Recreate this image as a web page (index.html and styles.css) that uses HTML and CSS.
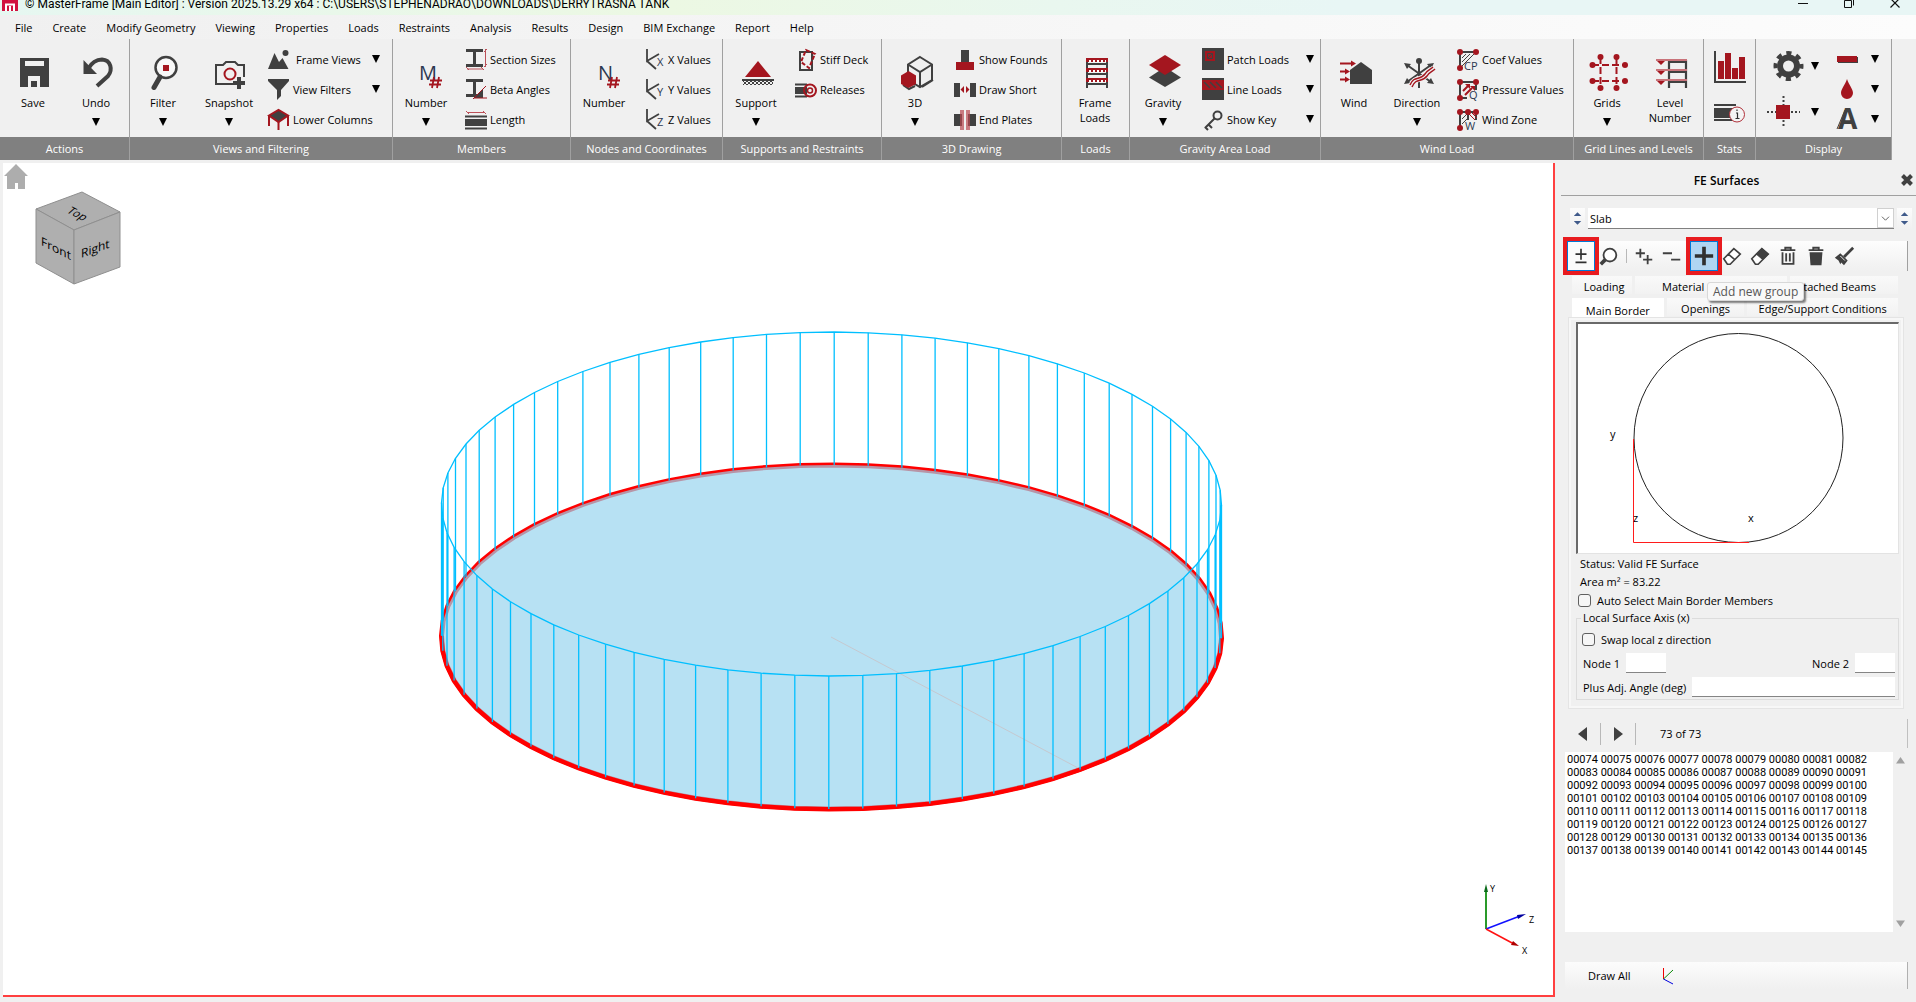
FILE: index.html
```html
<!DOCTYPE html>
<html lang="en">
<head>
    <meta charset="UTF-8">
    <meta name="viewport" content="width=device-width, initial-scale=1.0">
    <title>MasterFrame</title>
    <link rel="stylesheet" href="styles.css">
</head>
<body>
    <header class="titlebar">
        <svg class="logo" width="16" height="11" viewBox="0 0 16 11"><rect width="16" height="11" fill="#d1123f"/><path d="M4 11V4M8 11V6M12 11V4M3 4.500H13" stroke="#fff" stroke-width="2" fill="none"/></svg>
        <span class="title-text">© MasterFrame [Main Editor] : Version 2025.13.29 x64 : C:\USERS\STEPHENADRAO\DOWNLOADS\DERRYTRASNA TANK</span>
        <div class="window-buttons">
            <button aria-label="Minimize"><svg width="10" height="10" viewBox="0 0 10 10"><path d="M0 5.500H10" stroke="#111"/></svg></button>
            <button aria-label="Restore"><svg width="10" height="10" viewBox="0 0 10 10"><path d="M.5 2.500H7.500V9.500H.5ZM3 .5H8Q9.500 .5 9.500 2V7.500" fill="none" stroke="#111"/></svg></button>
            <button aria-label="Close"><svg width="10" height="10" viewBox="0 0 10 10"><path d="M.5 .5L9.500 9.500M9.500 .5L.5 9.500" stroke="#111" stroke-width="1.200"/></svg></button>
        </div>
    </header>

    <nav class="menubar">
        <button>File</button>
        <button>Create</button>
        <button>Modify Geometry</button>
        <button>Viewing</button>
        <button>Properties</button>
        <button>Loads</button>
        <button>Restraints</button>
        <button>Analysis</button>
        <button>Results</button>
        <button>Design</button>
        <button>BIM Exchange</button>
        <button>Report</button>
        <button>Help</button>
    </nav>

    <div class="ribbon">
        <section class="group group-actions">
            <div class="group-body">
                <button class="tool">
                    <svg viewBox="0 0 40 40"><path fill="#404040" fill-rule="evenodd" d="M7 7H36V36H27V25H15V36H7ZM12 10V15H31V10ZM18 30H24V36H18Z"/></svg>
                    <span>Save</span>
                </button>
                <button class="tool narrow">
                    <svg viewBox="0 0 40 40"><path d="M12 18C16 11 20 8.500 26 8.500C35 9 37 19 32 25L21 35" fill="none" stroke="#404040" stroke-width="4"/><path d="M7.500 9V23H21Z" fill="#404040"/></svg>
                    <span>Undo</span><i class="caret"></i>
                </button>
            </div>
            <h2>Actions</h2>
        </section>

        <section class="group group-views">
            <div class="group-body">
                <button class="tool">
                    <svg viewBox="0 0 40 40"><circle cx="23" cy="16.500" r="10.500" fill="#f8f8f8" stroke="#404040" stroke-width="2.500"/><path d="M17 26L11 36.500" stroke="#404040" stroke-width="5" stroke-linecap="round"/><rect x="20" y="14" width="6" height="6" fill="#a4161f"/></svg>
                    <span>Filter</span><i class="caret"></i>
                </button>
                <button class="tool">
                    <svg viewBox="0 0 40 40"><path d="M35 26V14H29L26 11H17L14 14H7V33H24" fill="none" stroke="#404040" stroke-width="2"/><circle cx="21" cy="23" r="5.500" fill="none" stroke="#a4161f" stroke-width="2"/><path d="M30 26V38M24 32H36" stroke="#404040" stroke-width="4"/></svg>
                    <span>Snapshot</span><i class="caret"></i>
                </button>
                <div class="tool-list with-caret">
                    <button><svg viewBox="0 0 22 22"><path d="M0 21L6.500 5L11 14L14.500 10L20.500 21Z" fill="#404040"/><circle cx="17.500" cy="5" r="3" fill="#404040"/></svg><span class="indent">Frame Views</span><i class="caret"></i></button>
                    <button><svg viewBox="0 0 22 22"><path d="M0 1H21V3L13 12V18L9 22V12L0 3Z" fill="#404040"/></svg><span>View Filters</span><i class="caret"></i></button>
                    <button><svg viewBox="0 0 22 22"><path d="M1 7V18M20 7V18M10.500 14V22" stroke="#a4161f" stroke-width="2"/><path d="M1 7.500L10.500 2L20 7.500L10.500 14Z" fill="#404040" stroke="#a4161f" stroke-width="2"/></svg><span>Lower Columns</span></button>
                </div>
            </div>
            <h2>Views and Filtering</h2>
        </section>

        <section class="group group-members">
            <div class="group-body">
                <button class="tool">
                    <svg viewBox="0 0 40 40"><text x="13" y="29" class="glyph-big">M</text><path d="M28 26L26 37M33 26L31 37M24 29.500H36M23 33.500H35" stroke="#a4161f" stroke-width="1.800"/></svg>
                    <span>Number</span><i class="caret"></i>
                </button>
                <div class="tool-list">
                    <button><svg viewBox="0 0 22 22"><path d="M1 2.500H18M1 17.500H18M9.500 2V18" stroke="#404040" stroke-width="3"/><path d="M20.500 1V19M19 4L22 1M19 19L22 16M2 21H18M1 19L4 22M16 19L19 22" stroke="#bb5058" fill="none"/></svg><span>Section Sizes</span></button>
                    <button><svg viewBox="0 0 22 22"><path d="M1 2.500H18M1 17.500H14M9.500 2V18" stroke="#404040" stroke-width="3"/><path d="M9 20L18 11V20Z" fill="#404040"/><path d="M8 21L21 8M9 20H22" stroke="#a4161f" fill="none"/></svg><span>Beta Angles</span></button>
                    <button><svg viewBox="0 0 22 22"><path d="M0 8.500H22M0 20.500H22" stroke="#404040" stroke-width="2"/><rect y="11" width="22" height="7" fill="#404040"/><path d="M2 4.500H20M1 3L4 6M18 3L21 6" stroke="#bb5058"/></svg><span>Length</span></button>
                </div>
            </div>
            <h2>Members</h2>
        </section>

        <section class="group group-nodes">
            <div class="group-body">
                <button class="tool">
                    <svg viewBox="0 0 40 40"><text x="14" y="29" class="glyph-big">N</text><path d="M28 26L26 37M33 26L31 37M24 29.500H36M23 33.500H35" stroke="#a4161f" stroke-width="1.800"/></svg>
                    <span>Number</span>
                </button>
                <div class="tool-list">
                    <button><svg viewBox="0 0 22 22"><path d="M4 1V13L16 6M4 13L13 21" fill="none" stroke="#404040" stroke-width="1.800"/><text x="14" y="18" class="glyph-small">X</text></svg><span>X Values</span></button>
                    <button><svg viewBox="0 0 22 22"><path d="M4 1V13L16 6M4 13L13 21" fill="none" stroke="#404040" stroke-width="1.800"/><text x="14" y="18" class="glyph-small">Y</text></svg><span>Y Values</span></button>
                    <button><svg viewBox="0 0 22 22"><path d="M4 1V13L16 6M4 13L13 21" fill="none" stroke="#404040" stroke-width="1.800"/><text x="14" y="18" class="glyph-small">Z</text></svg><span>Z Values</span></button>
                </div>
            </div>
            <h2>Nodes and Coordinates</h2>
        </section>

        <section class="group group-supports">
            <div class="group-body">
                <button class="tool">
                    <svg viewBox="0 0 40 40"><path d="M22 10L35 26H9Z" fill="#a4161f"/><path d="M6 29H38" stroke="#404040" stroke-width="2"/><path d="M7 30l4 4l4-4l4 4l4-4l4 4l4-4l4 4l2-2M7 34l4-4l4 4l4-4l4 4l4-4l4 4l4-4l2 2" fill="none" stroke="#404040"/></svg>
                    <span>Support</span><i class="caret"></i>
                </button>
                <div class="tool-list">
                    <button><svg viewBox="0 0 22 22"><rect x="5" y="4" width="12" height="18" fill="none" stroke="#404040" stroke-width="2"/><path d="M11 2L20 6L14 20L6 14Z" fill="none" stroke="#a4161f" stroke-width="2" stroke-dasharray="4 2"/></svg><span>Stiff Deck</span></button>
                    <button><svg viewBox="0 0 22 22"><path d="M0 6.500H12M0 18.500H12" stroke="#404040" stroke-width="2"/><rect y="9" width="12" height="7" fill="#404040"/><circle cx="15" cy="12.500" r="6" fill="none" stroke="#a4161f" stroke-width="2"/><circle cx="15" cy="12.500" r="2.500" fill="none" stroke="#a4161f" stroke-width="1.500"/></svg><span>Releases</span></button>
                </div>
            </div>
            <h2>Supports and Restraints</h2>
        </section>

        <section class="group group-drawing">
            <div class="group-body">
                <button class="tool">
                    <svg viewBox="0 0 40 40"><path d="M25 6L37 13.500V29L25 36L13 29V13.500ZM13 13.500L25 21L37 13.500M25 21V36" fill="#f0f0f0" stroke="#404040" stroke-width="2"/><path d="M27 36L38 29M8 34L14 38L20 35" fill="none" stroke="#404040" stroke-width="2"/><path d="M13.500 20L21 24.500V33L13.500 37L6 33V24.500Z" fill="#a4161f"/></svg>
                    <span>3D</span><i class="caret"></i>
                </button>
                <div class="tool-list">
                    <button><svg viewBox="0 0 22 22"><rect x="7" y="2" width="8" height="12" fill="#404040"/><rect x="2" y="14" width="18" height="8" fill="#a4161f"/></svg><span>Show Founds</span></button>
                    <button><svg viewBox="0 0 22 22"><path d="M0 5H6V19H0ZM16 5H22V19H16Z" fill="#404040"/><path d="M10 8V15L6.500 11.500ZM12 8V15L15.500 11.500Z" fill="#a4161f"/></svg><span>Draw Short</span></button>
                    <button><svg viewBox="0 0 22 22"><path d="M0 6H8V18H0ZM14 6H22V18H14Z" fill="#404040"/><path d="M6 2H10V22H6ZM12 2H16V22H12Z" fill="#b84750" opacity=".7"/></svg><span>End Plates</span></button>
                </div>
            </div>
            <h2>3D Drawing</h2>
        </section>

        <section class="group group-loads">
            <div class="group-body">
                <button class="tool">
                    <svg viewBox="0 0 40 40"><path d="M12 8V37M32 8V37M12 13H32M12 23H32M12 33H32" fill="none" stroke="#404040" stroke-width="2"/><path d="M11 9H33M11 19H33M11 29H33" stroke="#a4161f" stroke-width="4"/><path d="M14 10H31M14 20H31M14 30H31" stroke="#fff" stroke-width="2" stroke-dasharray="2 2"/></svg>
                    <span>Frame<br>Loads</span>
                </button>
            </div>
            <h2>Loads</h2>
        </section>

        <section class="group group-gravity">
            <div class="group-body">
                <button class="tool">
                    <svg viewBox="0 0 40 40"><path d="M22 16L38 26.500L22 36L6 26.500Z" fill="#404040"/><path d="M22 4L38 14L22 24L6 14Z" fill="#a4161f"/></svg>
                    <span>Gravity</span><i class="caret"></i>
                </button>
                <div class="tool-list with-caret">
                    <button><svg viewBox="0 0 22 22"><rect width="22" height="22" fill="#404040"/><rect x="3" y="3" width="10" height="10" fill="#a4161f"/><path d="M5.500 5.500H10.500V10.500H5.500ZM6 10L10 6" fill="none" stroke="#404040"/></svg><span>Patch Loads</span><i class="caret"></i></button>
                    <button><svg viewBox="0 0 22 22"><rect width="22" height="22" fill="#404040"/><rect y="2" width="22" height="10" fill="#a4161f"/><path d="M2 4L8 10M8 4L14 10M14 4L20 10" stroke="#404040" stroke-width="1.500"/></svg><span>Line Loads</span><i class="caret"></i></button>
                    <button><svg viewBox="0 0 22 22"><circle cx="15.500" cy="7.500" r="4" fill="none" stroke="#404040" stroke-width="2"/><path d="M12.500 10.500L3 20M7 17L10 20M3 19L6 22" fill="none" stroke="#404040" stroke-width="2"/></svg><span>Show Key</span><i class="caret"></i></button>
                </div>
            </div>
            <h2>Gravity Area Load</h2>
        </section>

        <section class="group group-wind">
            <div class="group-body">
                <button class="tool">
                    <svg viewBox="0 0 40 40"><path d="M16 33V19L27 11L38 19V33Z" fill="#404040"/><path d="M6 12.500H18M6 20.500H12M6 28.500H12" stroke="#a4161f" stroke-width="2"/><path d="M17 9.500V15.500L22 12.500ZM11 17.500V23.500L16 20.500ZM11 25.500V31.500L16 28.500Z" fill="#a4161f"/></svg>
                    <span>Wind</span>
                </button>
                <button class="tool narrow">
                    <svg viewBox="0 0 40 40"><path d="M22 9V37M10 14L34 31M34 14L10 31" stroke="#404040" stroke-width="2"/><circle cx="22" cy="10" r="3" fill="#404040"/><path d="M7 12L14 13L10 18ZM37 12L30 13L34 18ZM7 33L14 32L10 27ZM37 33L30 32L34 27Z" fill="#404040"/><path d="M14 35C18 25 24 31 29 24C31 20 34 20 37 17" fill="none" stroke="#f0f0f0" stroke-width="6"/><path d="M13 34C17 24 23 30 28 23C30 19 33 19 36 16M15 36C19 26 25 32 30 25C32 21 35 21 38 18" fill="none" stroke="#a4161f" stroke-width="1.500"/></svg>
                    <span>Direction</span><i class="caret"></i>
                </button>
                <div class="tool-list spaced">
                    <button><svg viewBox="0 0 22 22"><path d="M19 4H3V20" fill="none" stroke="#404040" stroke-width="2"/><path d="M5 14L13 6M5 18L17 6M5 10L9 6" stroke="#404040"/><g fill="#a4161f"><circle cx="3" cy="4" r="3"/><circle cx="19" cy="4" r="3"/><circle cx="3" cy="20" r="3"/></g><text x="7" y="22" class="glyph-small">CP</text></svg><span>Coef Values</span></button>
                    <button><svg viewBox="0 0 22 22"><path d="M19 12V4H3V20H10" fill="none" stroke="#404040" stroke-width="2"/><path d="M6 13L11 8M8 17L15 10" stroke="#a4161f" stroke-width="2"/><path d="M8 6H13V11ZM13 8H18V13Z" fill="#a4161f"/><g fill="#a4161f"><circle cx="3" cy="4" r="3"/><circle cx="19" cy="4" r="3"/><circle cx="3" cy="20" r="3"/></g><text x="12" y="21" class="glyph-small">Q</text></svg><span>Pressure Values</span></button>
                    <button><svg viewBox="0 0 22 22"><path d="M19 12V4H3V20M11 4V12" fill="none" stroke="#404040" stroke-width="2"/><path d="M5 11L10 6M5 16L10 11" stroke="#404040"/><path d="M12 6L18 12M15 5L20 10" stroke="#a4161f"/><g fill="#a4161f"><circle cx="3" cy="4" r="3"/><circle cx="11" cy="4" r="3"/><circle cx="19" cy="4" r="3"/><circle cx="3" cy="20" r="3"/></g><text x="8" y="22" class="glyph-small">W</text></svg><span>Wind Zone</span></button>
                </div>
            </div>
            <h2>Wind Load</h2>
        </section>

        <section class="group group-grids">
            <div class="group-body">
                <button class="tool">
                    <svg viewBox="0 0 40 40"><path d="M13.500 6V38M29.500 6V38M5 14H38M5 30H38" stroke="#a4161f" stroke-width="2" stroke-dasharray="7 3"/><g fill="#a4161f"><circle cx="13.500" cy="6" r="3"/><circle cx="29.500" cy="6" r="3"/><circle cx="13.500" cy="37" r="3"/><circle cx="29.500" cy="37" r="3"/><circle cx="5.500" cy="14" r="3"/><circle cx="38" cy="14" r="3"/><circle cx="5.500" cy="30" r="3"/><circle cx="38" cy="30" r="3"/></g></svg>
                    <span>Grids</span><i class="caret"></i>
                </button>
                <button class="tool narrow">
                    <svg viewBox="0 0 40 40"><path d="M19 9V37M36 9V37M19 11H36M19 21H36M19 31H36" fill="none" stroke="#404040" stroke-width="2.200"/><path d="M6 9H37M6 19H37M6 29H37" stroke="#c9737a" stroke-width="2"/><path d="M7 10H15L11 14ZM7 20H15L11 24ZM7 30H15L11 34Z" fill="#a4161f"/></svg>
                    <span>Level<br>Number</span>
                </button>
            </div>
            <h2>Grid Lines and Levels</h2>
        </section>

        <section class="group group-stats">
            <div class="group-body stats-body">
                <button aria-label="Statistics"><svg width="32" height="32" viewBox="0 0 32 32"><path d="M1 0V31H32" fill="none" stroke="#404040" stroke-width="2"/><path d="M4 10H10V28H4ZM11 2H17V28H11ZM18 17H24V28H18ZM25 6H31V28H25Z" fill="#a4161f"/></svg></button>
                <button aria-label="Member info"><svg width="32" height="32" viewBox="0 0 32 32"><path d="M0 8H22M0 23H18" stroke="#404040" stroke-width="2"/><rect y="11" width="20" height="10" fill="#404040"/><circle cx="23" cy="17.500" r="7.500" fill="#f4f4f4" stroke="#b03039"/><path d="M22 16H23.500V21.500M21.500 21.500H25.500M23 12.500V14" fill="none" stroke="#303030" stroke-width="1.200"/></svg></button>
            </div>
            <h2>Stats</h2>
        </section>

        <section class="group group-display">
            <div class="group-body">
                <div class="display-list">
                    <button aria-label="Settings"><svg width="38" height="34" viewBox="0 0 38 34"><circle cx="22.500" cy="17" r="8.500" fill="none" stroke="#404040" stroke-width="6"/><circle cx="22.500" cy="17" r="13" fill="none" stroke="#404040" stroke-width="4" stroke-dasharray="5.210 5" stroke-dashoffset="2.600"/></svg><i class="caret"></i></button>
                    <button aria-label="Node display"><svg width="38" height="34" viewBox="0 0 38 34"><path d="M17.500 1V33M1 17H34" stroke="#404040" stroke-width="2" stroke-dasharray="2 2"/><rect x="10" y="10" width="14" height="14" fill="#a4161f"/></svg><i class="caret"></i></button>
                </div>
                <div class="tool-list display-styles">
                    <button aria-label="Line style"><svg viewBox="0 0 22 22"><rect x="2" y="9" width="20" height="6" fill="#404040"/><rect x="1" y="8" width="20" height="6" fill="#a4161f"/></svg><i class="caret"></i></button>
                    <button aria-label="Fill colour"><svg viewBox="0 0 22 22"><path d="M11 1C13 7 17 11 17 15A6 6 0 0 1 5 15C5 11 9 7 11 1Z" fill="#a4161f"/></svg><i class="caret"></i></button>
                    <button aria-label="Font"><svg viewBox="0 0 22 22"><path d="M1 21L9 2" stroke="#404040" fill="none"/><text x="2" y="21" class="glyph-font">A</text></svg><i class="caret"></i></button>
                </div>
            </div>
            <h2>Display</h2>
        </section>
    </div>

    <div class="workspace">
        <main class="viewport">
            <svg class="model" viewBox="3 163 1550 832" role="img" aria-label="Tank model">
                <polygon id="floor-ring" fill="none" stroke="#f00" stroke-width="5"/>
                <polygon id="floor" fill="#98d4ee" fill-opacity=".7"/>
                <path d="M831 637L1080 769" stroke="#c5c8cf"/>
                <polyline id="floor-front" fill="none" stroke="#f00" stroke-width="4"/>
                <polygon id="top-ring" class="wall"/>
                <path id="columns" class="wall"/>

                <g stroke-width="1.500">
                    <path d="M1486 929V890" stroke="#2a9a2a" stroke-width="2"/><path d="M1486 884L1488 892H1484Z" fill="#0a6a1a"/>
                    <path d="M1486 929L1520 916" stroke="#11f"/><path d="M1526 914L1517 915L1518 919Z" fill="#0000a0"/>
                    <path d="M1486 929L1514 944" stroke="#f11"/><path d="M1519 946L1513 941L1511 945Z" fill="#b00000"/>
                </g>
                <g class="axis-label"><text x="1490" y="892">Y</text><text x="1529" y="923">Z</text><text x="1522" y="954">X</text></g>
            </svg>
            <div class="view-nav">
                <button aria-label="Home view"><svg width="24" height="25" viewBox="0 0 24 25"><path d="M12 0L24 12H21V25H14V19H11V25H3V12H0Z" fill="#adadad"/></svg></button>
                <svg class="view-cube" width="88" height="94" viewBox="34 191 88 94">
                    <g stroke="#8f8f8f" stroke-width="1" fill="#afafaf" stroke-linejoin="round">
                        <path d="M36 209L82 192L120 212L74 230Z"/><path d="M36 209L74 230V284L36 263Z"/><path d="M74 230L120 212V267L74 284Z"/>
                    </g>
                    <g class="cube-label">
                        <text transform="translate(41 245) skewY(27)">Front</text>
                        <text transform="translate(81 258) skewY(-20)">Right</text>
                        <text transform="translate(66 212) rotate(28) skewX(-20)" class="cube-top">Top</text>
                    </g>
                </svg>
            </div>
        </main>

        <aside class="panel">
            <div class="panel-head">
                <h1>FE Surfaces</h1>
                <button aria-label="Close panel"><svg width="12" height="12" viewBox="0 0 12 12"><path d="M1.500 1.500L10.500 10.500M10.500 1.500L1.500 10.500" stroke="#404040" stroke-width="4"/></svg></button>
            </div>

            <div class="surface-row">
                <div class="stepper"><button aria-label="Previous type"><i></i></button><button aria-label="Next type"><i class="down"></i></button></div>
                <div class="combo">
                    <select aria-label="Surface type"><option>Slab</option></select>
                    <svg width="17" height="20" viewBox="0 0 17 20"><path d="M4.500 8.500L8.500 12.500L12.500 8.500" fill="none" stroke="#505050"/></svg>
                </div>
                <div class="stepper"><button aria-label="Previous surface"><i></i></button><button aria-label="Next surface"><i class="down"></i></button></div>
            </div>

            <div class="toolbar">
                <button class="pressed marked" aria-label="Add or remove"><svg viewBox="0 0 24 24"><path d="M12 4V16M6 10H18M6 19H18" stroke="#303030" stroke-width="1.800"/></svg></button>
                <button aria-label="Find"><svg viewBox="0 0 24 24"><circle cx="13" cy="11" r="7" fill="#fff" stroke="#404040" stroke-width="2"/><path d="M8 16L3 21" stroke="#404040" stroke-width="4"/></svg></button>
                <hr>
                <button aria-label="Add all"><svg viewBox="0 0 24 24"><path d="M3 9H13M8 4V14M11 16H21M16 11V21" stroke="#404040" stroke-width="2"/></svg></button>
                <button aria-label="Remove all"><svg viewBox="0 0 24 24"><path d="M2 9H12M11 16H21" stroke="#404040" stroke-width="2"/></svg></button>
                <button class="active marked" aria-label="Add new group"><svg viewBox="0 0 24 24"><path d="M12 2V22M2 12H22" stroke="#303030" stroke-width="4"/></svg></button>
                <button aria-label="Erase"><svg viewBox="0 0 24 24"><path d="M3 15L14 4L21 10L10 21H7Z M8 10L15 16" fill="#fff" stroke="#404040" stroke-width="1.800"/></svg></button>
                <button aria-label="Erase group"><svg viewBox="0 0 24 24"><path d="M3 15L14 4L21 10L10 21H7Z" fill="#fff" stroke="#404040" stroke-width="1.800"/><path d="M8 10L14 4L21 10L15 16Z" fill="#404040" stroke="#404040"/></svg></button>
                <button aria-label="Delete"><svg viewBox="0 0 24 24"><path d="M4 5.500H20M9 5V3H15V5M6 8V20.500H18V8M10 9V18M14 9V18" fill="none" stroke="#404040" stroke-width="2"/></svg></button>
                <button aria-label="Delete all"><svg viewBox="0 0 24 24"><path d="M4 5.500H20M9 5V3H15V5" fill="none" stroke="#404040" stroke-width="2"/><path d="M5 8H19L18 22H6Z" fill="#404040"/></svg></button>
                <button aria-label="Clean up"><svg viewBox="0 0 24 24"><path d="M22 3L12 13" stroke="#404040" stroke-width="3"/><path d="M8 9L16 17L12 22L9 19L8 21L6 17L2 14Z" fill="#404040"/><path d="M8 12L13 17" stroke="#f4f4f4"/></svg></button>
                <div class="tooltip" role="tooltip">Add new group</div>
            </div>

            <div class="tabs">
                <div class="tab-row">
                    <button class="tab-loading">Loading</button>
                    <button class="tab-material">Material</button>
                    <button class="tab-beams">Attached Beams</button>
                </div>
                <div class="tab-row">
                    <button class="tab-border selected">Main Border</button>
                    <button class="tab-openings">Openings</button>
                    <button class="tab-edge">Edge/Support Conditions</button>
                </div>
            </div>

            <div class="tab-page">
                <svg class="preview" viewBox="1578 324 320 229">
                    <circle cx="1738.500" cy="438" r="104.500" fill="none" stroke="#222"/>
                    <path d="M1633.500 439V542.500H1749" fill="none" stroke="#ff1c1c" stroke-width="1"/>
                    <text x="1610" y="438">y</text><text x="1633" y="522">z</text><text x="1748" y="522">x</text>
                </svg>
                <p>Status: Valid FE Surface</p>
                <p>Area m² = 83.22</p>
                <label class="check"><input type="checkbox">Auto Select Main Border Members</label>
                <fieldset>
                    <legend>Local Surface Axis (x)</legend>
                    <label class="check"><input type="checkbox">Swap local z direction</label>
                    <div class="field-row">
                        <label for="node1">Node 1</label><input type="text" id="node1" class="node-input">
                        <label for="node2" class="push">Node 2</label><input type="text" id="node2" class="node-input">
                    </div>
                    <div class="field-row">
                        <label for="angle">Plus Adj. Angle (deg)</label><input type="text" id="angle" class="angle-input">
                    </div>
                </fieldset>
            </div>

            <div class="pager">
                <button aria-label="Previous"><svg width="10" height="14" viewBox="0 0 10 14"><path d="M9 0V14L0 7Z" fill="#404040"/></svg></button>
                <hr>
                <button aria-label="Next"><svg width="10" height="14" viewBox="0 0 10 14"><path d="M1 0V14L10 7Z" fill="#404040"/></svg></button>
                <hr>
                <span>73 of 73</span>
            </div>

            <div class="members">
                <textarea readonly aria-label="Members">00074 00075 00076 00077 00078 00079 00080 00081 00082
00083 00084 00085 00086 00087 00088 00089 00090 00091
00092 00093 00094 00095 00096 00097 00098 00099 00100
00101 00102 00103 00104 00105 00106 00107 00108 00109
00110 00111 00112 00113 00114 00115 00116 00117 00118
00119 00120 00121 00122 00123 00124 00125 00126 00127
00128 00129 00130 00131 00132 00133 00134 00135 00136
00137 00138 00139 00140 00141 00142 00143 00144 00145</textarea>
                <div class="scroll">
                    <svg width="9" height="7" viewBox="0 0 9 7"><path d="M4.500 0L9 6.500H0Z" fill="#a0a0a0"/></svg>
                    <svg width="9" height="7" viewBox="0 0 9 7"><path d="M4.500 7L9 .5H0Z" fill="#a0a0a0"/></svg>
                </div>
            </div>

            <div class="draw-bar">
                <button>Draw All</button>
                <button aria-label="Axes"><svg width="12" height="18" viewBox="0 0 12 18"><path d="M1.500 1V12" stroke="#e00"/><path d="M1.500 12L11 3" stroke="#0a8a0a"/><path d="M1.500 12L11 17" stroke="#00d"/></svg></button>
            </div>
        </aside>
    </div>

    <script src="script.js"></script>
</body>
</html>
```
FILE: styles.css
```css
* {
    margin: 0;
    padding: 0;
    box-sizing: border-box;
}

body {
    display: flex;
    flex-direction: column;
    height: 100vh;
    overflow: hidden;
    background: #f0f0f0;
    color: #000;
    font-family: "Open Sans", "Noto Sans", sans-serif;
    font-size: 11px;
}

button {
    border: none;
    background: none;
    color: inherit;
    font: inherit;
}

svg {
    display: block;
    flex: none;
    overflow: visible;
}

/* title bar and menu */
.titlebar {
    display: flex;
    height: 15px;
    padding-left: 2px;
    overflow: hidden;
    background: linear-gradient(90deg, #e6f7f1, #ecf8e3 35%, #e9f7ef 55%, #e8f6f5 70%, #e8f6f5);
}

.title-text {
    margin-left: 7px;
    font-family: Roboto, sans-serif;
    font-size: 12px;
    line-height: 8px;
    white-space: nowrap;
}

.window-buttons {
    display: flex;
    gap: 36px;
    margin-left: auto;
    padding-right: 16px;
}

.window-buttons button {
    height: 8px;
}

.window-buttons svg {
    margin-top: -3px;
}

.menubar {
    display: flex;
    gap: 20px;
    height: 24px;
    padding-left: 15px;
    background: linear-gradient(90deg, #f0f0f0, #fcfcfc);
}

/* ribbon */
.ribbon {
    display: flex;
    height: 121px;
}

.group {
    display: flex;
    flex-direction: column;
    flex: none;
    border-right: 1px solid #a0a0a0;
}

.group-actions { width: 130px; }
.group-views { width: 263px; }
.group-members { width: 178px; }
.group-nodes { width: 152px; }
.group-supports { width: 159px; }
.group-drawing { width: 180px; }
.group-loads { width: 68px; }
.group-gravity { width: 191px; }
.group-wind { width: 253px; }
.group-grids { width: 130px; }
.group-stats { width: 52px; }
.group-display { width: 136px; }

.group-body {
    display: flex;
    flex: 1;
}

.group h2 {
    height: 23px;
    background: #808080;
    color: #fff;
    font-size: 11px;
    font-weight: normal;
    line-height: 23px;
    text-align: center;
    white-space: nowrap;
}

.tool {
    display: flex;
    flex-direction: column;
    align-items: center;
    width: 66px;
    padding-top: 12px;
    line-height: 15px;
}

.tool.narrow {
    width: 60px;
}

.tool svg {
    width: 40px;
    height: 40px;
    margin-bottom: 4px;
}

.tool .caret {
    margin-top: 8px;
}

.caret {
    width: 8px;
    height: 8px;
    background: #000;
    clip-path: polygon(0 0, 100% 0, 50% 100%);
}

.tool-list {
    display: flex;
    flex-direction: column;
    margin-left: 6px;
    padding-top: 5px;
}

.tool-list.spaced {
    margin-left: 10px;
}

.tool-list button {
    display: flex;
    align-items: center;
    gap: 3px;
    height: 30px;
    white-space: nowrap;
}

.tool-list svg {
    width: 22px;
    height: 22px;
}

.with-caret {
    width: 112px;
}

.tool-list .caret {
    margin-left: auto;
}

.indent {
    padding-left: 3px;
}

.glyph-big {
    font-size: 20px;
    fill: #2c3850;
}

.glyph-small {
    font-size: 11px;
    fill: #2c3850;
}

.glyph-font {
    font-size: 28px;
    font-weight: bold;
    fill: #404040;
}

.stats-body {
    flex-direction: column;
    align-items: center;
    gap: 14px;
    padding-top: 12px;
}

.display-list {
    display: flex;
    flex-direction: column;
    gap: 12px;
    padding: 10px 0 0 10px;
}

.display-list button {
    display: flex;
    align-items: center;
    gap: 7px;
}

.display-styles {
    width: 43px;
    margin-left: 17px;
}

/* drawing area */
.workspace {
    display: flex;
    flex: 1;
    min-height: 0;
}

.viewport {
    position: relative;
    flex: 1;
    min-width: 0;
    margin: 3px 0 5px 3px;
    border-right: 2px solid #ff4040;
    border-bottom: 2px solid #ff4040;
    background: #fff;
}

.model {
    width: 100%;
    height: 100%;
}

.wall {
    fill: none;
    stroke: #00bfff;
    stroke-width: 1.3;
}

.axis-label {
    font-size: 9px;
}

.view-nav {
    position: absolute;
    top: 1px;
    left: 1px;
}

.view-nav button {
    display: block;
}

.view-cube {
    margin: 2px 0 0 30px;
}

.cube-label {
    font-size: 12px;
}

.cube-top {
    font-size: 11px;
}

/* side panel */
.panel {
    display: flex;
    flex-direction: column;
    flex: none;
    width: 361px;
    padding: 3px 8px 0;
}

.panel-head {
    display: flex;
    align-items: center;
    height: 33px;
    margin: 0 -8px 0 -2px;
    padding: 2px 3px 0 0;
    border-bottom: 1px solid #a0a0a0;
}

.panel-head h1 {
    flex: 1;
    padding-right: 9px;
    font-size: 12px;
    font-weight: 600;
    text-align: center;
}

.surface-row {
    display: flex;
    gap: 3px;
    height: 21px;
    margin: 12px -4px 0 7px;
}

.stepper {
    display: flex;
    flex-direction: column;
    align-items: center;
    justify-content: space-evenly;
    width: 15px;
    background: linear-gradient(#fcfcfc, #f0f0f0);
}

.stepper button {
    height: 4px;
}

.stepper i {
    display: block;
    width: 8px;
    height: 4px;
    background: #3f5a8a;
    clip-path: polygon(50% 0, 100% 100%, 0 100%);
}

.stepper .down {
    clip-path: polygon(0 0, 100% 0, 50% 100%);
}

.combo {
    display: flex;
    flex: 1;
    border-bottom: 1px solid #808080;
    background: #fff;
}

.combo select {
    flex: 1;
    padding-left: 2px;
    border: none;
    background: none;
    appearance: none;
    font: inherit;
}

.combo svg {
    border: 1px solid #d0d0d0;
}

.toolbar {
    position: relative;
    display: flex;
    align-items: center;
    height: 30px;
    margin-top: 12px;
    border-right: 1px solid #a0a0a0;
    background: linear-gradient(#fdfdfd, #f0f0f0);
}

.toolbar button {
    display: flex;
    align-items: center;
    justify-content: center;
    width: 28px;
    height: 28px;
    flex: none;
}

.toolbar svg {
    width: 22px;
    height: 22px;
}

.toolbar hr,
.pager hr {
    width: 1px;
    border: none;
    background: #b8b8b8;
}

.toolbar hr {
    height: 14px;
    margin: 0 3px;
}

.toolbar .marked {
    width: 36px;
    height: 38px;
    margin-right: -4px;
    outline: 1px solid #0078d7;
    outline-offset: -5px;
    border: 4px solid #e81b1f;
}

.toolbar .pressed {
    background: #fbfbfb;
}

.toolbar .active {
    background: #b0d5f2;
}

.tooltip {
    position: absolute;
    top: 41px;
    left: 144px;
    z-index: 1;
    padding: 0 5px;
    border: 1px solid #d8d8d8;
    border-radius: 3px;
    background: #f9f9f9;
    box-shadow: 2px 2px 2px rgba(0, 0, 0, 0.5);
    color: #575757;
    font-size: 12px;
    line-height: 17px;
}

.tabs {
    display: flex;
    flex-direction: column;
    gap: 4px;
    margin: 5px 10px 0 9px;
}

.tab-row {
    display: flex;
    gap: 3px;
    height: 18px;
}

.tab-row button {
    padding-top: 4px;
    background: linear-gradient(#f9f9f9, #f2f2f2);
    line-height: 14px;
    white-space: nowrap;
}

.tab-row .selected {
    height: 20px;
    padding-top: 6px;
    background: #fff;
}

.tab-row .tab-loading { flex: 75; padding-left: 4px; }
.tab-row .tab-material { flex: 128; padding-right: 56px; }
.tab-row .tab-beams { flex: 117; padding-right: 20px; }
.tab-border { flex: 92; }
.tab-openings { flex: 78; }
.tab-edge { flex: 151; }

.tab-page {
    margin: 1px 4px 0 5px;
    padding: 4px 4px 8px 7px;
    border: 1px solid #e4e4e4;
    box-shadow: inset 0 0 0 2px #f7f7f7;
}

.preview {
    width: 100%;
    height: 232px;
    border: 1px solid #e3e3e3;
    border-top: 2px solid #696969;
    border-left: 2px solid #696969;
    background: #fff;
}

.tab-page p {
    padding-left: 4px;
    line-height: 18px;
}

.tab-page p:first-of-type {
    margin-top: 1px;
}

.check {
    display: flex;
    align-items: center;
    gap: 6px;
    height: 19px;
    padding-left: 2px;
}

.check input {
    width: 13px;
    height: 13px;
    border: 1px solid #606060;
    border-radius: 3px;
    background: #f6f6f6;
    appearance: none;
}

fieldset {
    padding: 4px 3px 2px 4px;
    border: 1px solid #dcdcdc;
}

fieldset .check {
    padding-left: 1px;
}

legend {
    padding: 0 2px;
    line-height: 16px;
}

.field-row {
    display: flex;
    align-items: center;
    gap: 6px;
    height: 20px;
    margin-top: 4px;
    padding-left: 2px;
}

.field-row input {
    min-width: 0;
    height: 20px;
    border: none;
    border-bottom: 1px solid #858585;
    background: #fff;
    font: inherit;
}

.node-input {
    width: 40px;
}

.angle-input {
    flex: 1;
}

.push {
    margin-left: auto;
}

.pager {
    display: flex;
    align-items: center;
    height: 29px;
    margin-top: 10px;
    padding-left: 15px;
    border-right: 1px solid #c0c0c0;
}

.pager hr {
    height: 22px;
    margin: 0 12px;
}

.pager span {
    margin-left: 12px;
}

.members {
    display: flex;
    height: 180px;
    margin: 4px 0 0 2px;
}

.members textarea {
    flex: 1;
    padding: 1px 2px;
    border: none;
    outline: none;
    resize: none;
    background: #fff;
    font-family: Roboto, sans-serif;
    font-size: 11px;
    line-height: 13px;
}

.scroll {
    display: flex;
    flex-direction: column;
    align-items: center;
    justify-content: space-between;
    width: 15px;
    padding: 5px 0;
}

.draw-bar {
    display: flex;
    align-items: center;
    gap: 32px;
    height: 27px;
    margin: 30px 0 0 2px;
    padding-left: 23px;
    border-right: 1px solid #b0b0b0;
    background: linear-gradient(#fcfcfc, #f0f0f0);
}
```
FILE: script.js
```js
// Tank geometry: 72 wall panels seen in projection
const CX = 831.5;
const FLOOR_Y = 637;
const WALL = 133;
const RX = 390;
const RY = 172;
const START = -0.4;

const nodes = [];
for (let i = 0; i < 72; i++) {
    const a = (i * 5 + START) * Math.PI / 180;
    nodes.push([CX + RX * Math.cos(a), FLOOR_Y - RY * Math.sin(a)]);
}

const toPoints = (list, dy) => list.map(([x, y]) => x.toFixed(1) + ',' + (y - dy).toFixed(1)).join(' ');

document.getElementById('floor-ring').setAttribute('points', toPoints(nodes, 0));
document.getElementById('floor').setAttribute('points', toPoints(nodes, 0));
document.getElementById('floor-front').setAttribute('points', toPoints(nodes.slice(36).concat([nodes[0]]), 0));
document.getElementById('top-ring').setAttribute('points', toPoints(nodes, WALL));
document.getElementById('columns').setAttribute('d',
    nodes.map(([x, y]) => `M${x.toFixed(1)} ${y.toFixed(1)}v${-WALL}`).join(''));
```
